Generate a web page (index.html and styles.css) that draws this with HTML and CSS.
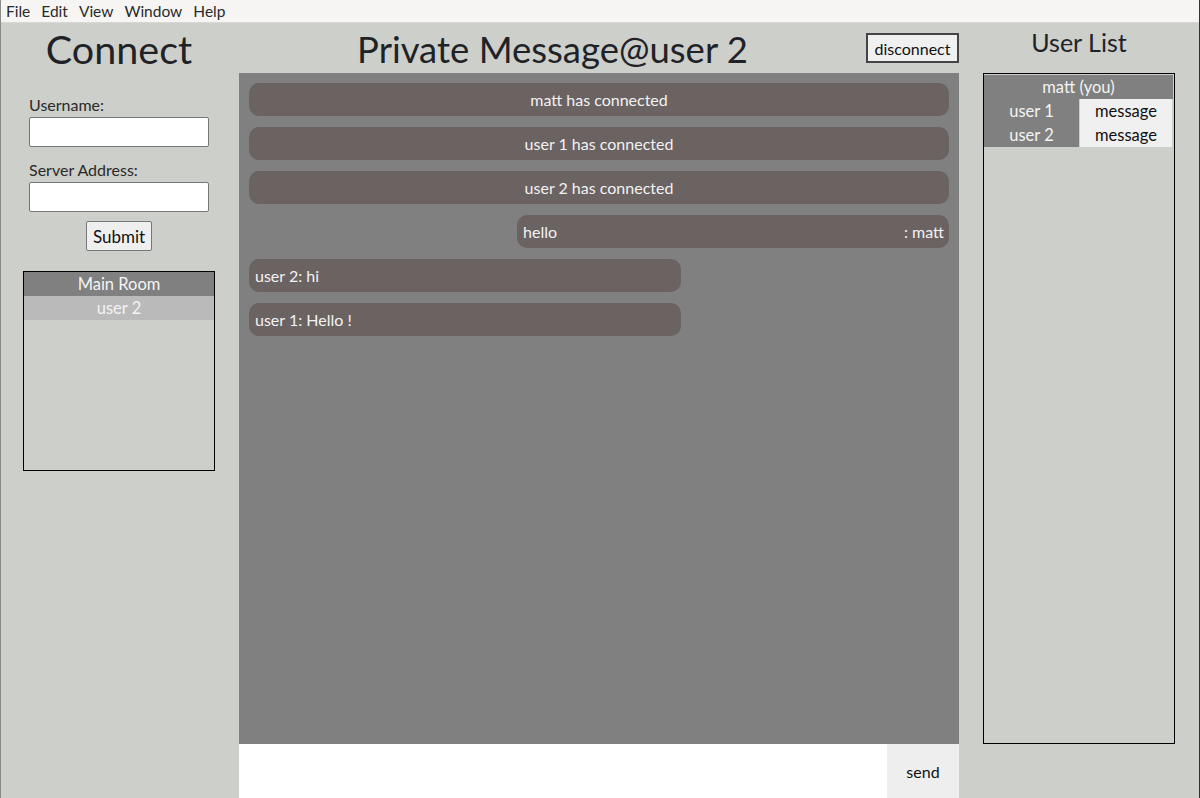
FILE: index.html
```html
<!DOCTYPE html>
<html lang="en">
<head>
    <meta charset="UTF-8">
    <title>Chat Client</title>
    <link rel="stylesheet" href="styles.css">
</head>
<body>
    <div class="window">
        <!-- Menu bar -->
        <nav class="menubar">
            <span>File</span>
            <span>Edit</span>
            <span>View</span>
            <span>Window</span>
            <span>Help</span>
        </nav>

        <div class="app">
            <!-- Connect panel -->
            <aside class="left-panel">
                <h1 class="connect-title">Connect</h1>
                <form class="connect-form">
                    <label class="field-label">Username:</label>
                    <input type="text" class="field-input">
                    <label class="field-label">Server Address:</label>
                    <input type="text" class="field-input last">
                    <button type="button" class="submit-btn">Submit</button>
                </form>
                <div class="room-box">
                    <div class="room-header">Main Room</div>
                    <div class="room-item">user 2</div>
                </div>
            </aside>

            <!-- Chat -->
            <main class="chat-panel">
                <div class="chat-top">
                    <h2 class="chat-title">Private Message@user 2</h2>
                    <button class="disconnect-btn">disconnect</button>
                </div>
                <div class="messages">
                    <div class="msg msg-system">matt has connected</div>
                    <div class="msg msg-system">user 1 has connected</div>
                    <div class="msg msg-system">user 2 has connected</div>
                    <div class="msg msg-own"><span>hello</span><span>: matt</span></div>
                    <div class="msg msg-other">user 2: hi</div>
                    <div class="msg msg-other">user 1: Hello !</div>
                </div>
                <div class="composer">
                    <input type="text" class="composer-input">
                    <button class="send-btn">send</button>
                </div>
            </main>

            <!-- User list -->
            <aside class="right-panel">
                <h2 class="userlist-title">User List</h2>
                <div class="userlist-box">
                    <div class="userlist-self">matt (you)</div>
                    <div class="user-row">
                        <span class="user-name">user 1</span>
                        <span class="user-msg">message</span>
                    </div>
                    <div class="user-row">
                        <span class="user-name">user 2</span>
                        <span class="user-msg">message</span>
                    </div>
                </div>
            </aside>
        </div>
    </div>
</body>
</html>
```

FILE: styles.css
```css
/* Base */
* {
    margin: 0;
    padding: 0;
    box-sizing: border-box;
}

html, body {
    height: 100%;
}

body {
    font-family: Lato, "Open Sans", sans-serif;
    color: #222;
    background: #cdcfca;
}

.window {
    height: 798px;
    display: flex;
    flex-direction: column;
    border-left: 1px solid #8a8a8a;
    border-right: 1px solid #6b1a1a;
}

/* Menu bar */
.menubar {
    height: 23px;
    background: #f6f5f3;
    border-bottom: 1px solid #d8d8d5;
    display: flex;
    gap: 11px;
    padding-left: 5px;
    font-size: 15.5px;
    line-height: 22px;
    color: #2a2a2a;
}

.app {
    flex: 1;
    display: flex;
    min-height: 0;
}

/* Left panel */
.left-panel {
    width: 236px;
    margin-right: 2px;
    display: flex;
    flex-direction: column;
    align-items: center;
}

.connect-title {
    font-size: 39.5px;
    font-weight: 400;
    line-height: 50px;
    margin-top: 1px;
    color: #1f2328;
}

.connect-form {
    display: flex;
    flex-direction: column;
    width: 180px;
    margin-top: 21px;
}

.field-label {
    font-size: 16px;
    line-height: 20px;
    color: #2a2a2a;
    margin-bottom: 2px;
}

.field-input {
    height: 30px;
    border: 1px solid #777;
    border-radius: 2px;
    background: #fff;
    margin-bottom: 13px;
}

.field-input.last {
    margin-bottom: 0;
}

.submit-btn {
    align-self: center;
    margin-top: 9px;
    height: 30px;
    padding: 0 6px;
    font-family: inherit;
    font-size: 17px;
    background: #efefef;
    border: 1px solid #777;
    border-radius: 2px;
    color: #111;
}

.room-box {
    width: 192px;
    height: 200px;
    margin-top: 20px;
    border: 1px solid #000;
}

.room-header, .room-item {
    height: 24px;
    line-height: 24px;
    text-align: center;
    font-size: 16.5px;
    color: #f4f4f4;
}

.room-header {
    background: #808080;
}

.room-item {
    background: #bababa;
}

/* Chat panel */
.chat-panel {
    width: 720px;
    display: flex;
    flex-direction: column;
}

.chat-top {
    height: 50px;
    display: flex;
    align-items: center;
}

.chat-title {
    flex: 1;
    text-align: center;
    font-size: 36.5px;
    font-weight: 400;
    color: #1f2328;
    margin-top: 2px;
}

.disconnect-btn {
    align-self: flex-start;
    margin-top: 10px;
    width: 93px;
    height: 30px;
    font-family: inherit;
    font-size: 16px;
    background: #f0f0f0;
    border: 2px solid #444;
    color: #111;
}

.messages {
    flex: 1;
    background: #808080;
    padding: 10px;
    display: flex;
    flex-direction: column;
    gap: 11px;
}

.msg {
    height: 33px;
    line-height: 33px;
    border-radius: 10px;
    background: #6b6262;
    color: #f2f2f2;
    font-size: 16px;
    padding: 0 6px;
}

.msg-system {
    text-align: center;
}

.msg-own {
    align-self: flex-end;
    width: 432px;
    display: flex;
    justify-content: space-between;
    padding-right: 5px;
}

.msg-other {
    width: 432px;
}

.composer {
    height: 54px;
    display: flex;
}

.composer-input {
    flex: 1;
    border: none;
    background: #fff;
}

.send-btn {
    width: 72px;
    border: none;
    background: #eeeeee;
    font-family: inherit;
    font-size: 16px;
    color: #111;
}

/* Right panel */
.right-panel {
    flex: 1;
    display: flex;
    flex-direction: column;
    align-items: center;
    padding-bottom: 54px;
}

.userlist-title {
    font-size: 25px;
    font-weight: 400;
    line-height: 38px;
    color: #1f2328;
}

.userlist-box {
    flex: 1;
    width: 192px;
    margin-top: 12px;
    border: 1px solid #000;
    padding: 1px 1px 0 0;
}

.userlist-self {
    height: 24px;
    line-height: 24px;
    text-align: center;
    background: #808080;
    color: #f4f4f4;
    font-size: 16.5px;
}

.user-row {
    display: flex;
    height: 24px;
    line-height: 24px;
    font-size: 16.5px;
}

.user-name {
    width: 95px;
    text-align: center;
    background: #808080;
    color: #f4f4f4;
}

.user-msg {
    flex: 1;
    margin-left: 1px;
    margin-right: 1px;
    text-align: center;
    background: #f0f0f0;
    color: #111;
}
```
